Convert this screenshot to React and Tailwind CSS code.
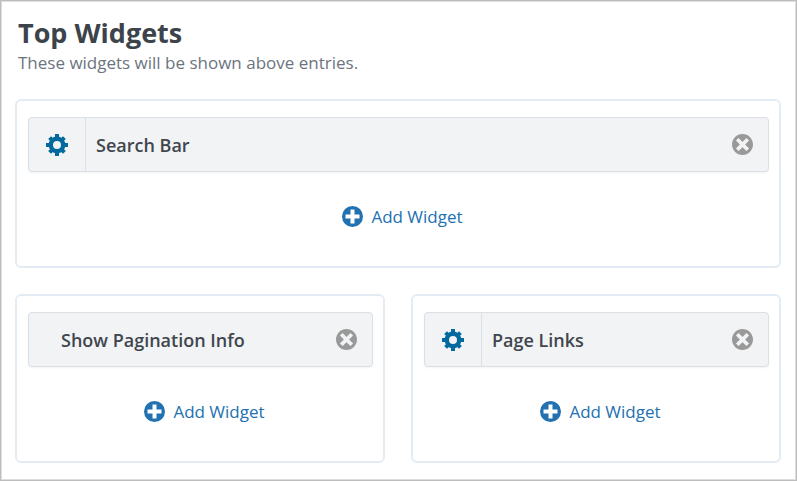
function GearIcon() {
  return (
    <svg className="size-[22px]" viewBox="0 0 22 22" fill="none" stroke="currentColor" aria-hidden="true">
      <circle cx="11" cy="11" r="6.2" strokeWidth="4.4" />
      <path
        strokeWidth="4"
        d="M11 0v4M11 18v4M0 11h4M18 11h4M3.6 3.6l2.8 2.8M15.6 15.6l2.8 2.8M18.4 3.6l-2.8 2.8M6.4 15.6l-2.8 2.8"
      />
    </svg>
  )
}

function DismissIcon() {
  return (
    <svg className="size-[21px]" viewBox="2 2 16 16" fill="currentColor" aria-hidden="true">
      <path d="M10 2c4.42 0 8 3.58 8 8s-3.58 8-8 8-8-3.58-8-8 3.58-8 8-8zm5 11l-3-3 3-3-2-2-3 3-3-3-2 2 3 3-3 3 2 2 3-3 3 3z" />
    </svg>
  )
}

function PlusIcon() {
  return (
    <svg className="size-[21px]" viewBox="0 0 21 21" fill="currentColor" aria-hidden="true">
      <path
        fillRule="evenodd"
        d="M10.5 0a10.5 10.5 0 1 1 0 21a10.5 10.5 0 0 1 0-21zM8.5 3.5v5h-5v4h5v5h4v-5h5v-4h-5v-5z"
      />
    </svg>
  )
}

function Widget({ label, settings }) {
  return (
    <div className="flex h-[55px] items-stretch rounded border border-[#dcdfe3] bg-[#f2f3f5] shadow-xs">
      {settings && (
        <button
          type="button"
          aria-label={`${label} settings`}
          className="flex w-[57px] items-center justify-center border-r border-[#dcdfe3] text-[#036a9f]"
        >
          <GearIcon />
        </button>
      )}
      <h3 className={`flex-1 self-center text-lg font-semibold text-[#40464d] ${settings ? 'pl-[10px]' : 'pl-8'}`}>
        {label}
      </h3>
      <button type="button" aria-label={`Remove ${label}`} className="px-[15px] text-[#999999]">
        <DismissIcon />
      </button>
    </div>
  )
}

function WidgetArea({ label, settings, className = '' }) {
  return (
    <section className={`rounded-md border-2 border-[#e3ecf4] pt-4 pr-[10px] pb-9 pl-[11px] ${className}`}>
      <Widget label={label} settings={settings} />
      <div className="mt-[31px] flex justify-center pl-2">
        <button type="button" className="flex items-center gap-2 text-[17px] leading-[27px] text-[#2271b1]">
          <PlusIcon />
          Add Widget
        </button>
      </div>
    </section>
  )
}

export default function App() {
  return (
    <main className="border border-[#bdbdbd] bg-white font-['Open_Sans','Noto_Sans',sans-serif]">
      <div className="border border-[#dedede] pt-[11px] pr-[14px] pb-4 pl-[13px]">
        <header className="px-[3px]">
          <h1 className="text-[27px] leading-10 font-bold text-[#3c434a]">Top Widgets</h1>
          <p className="text-[17px] leading-5 text-[#6c7480]">These widgets will be shown above entries.</p>
        </header>
        <div className="mt-[26px] grid grid-cols-2 gap-[26px]">
          <WidgetArea label="Search Bar" settings className="col-span-2" />
          <WidgetArea label="Show Pagination Info" />
          <WidgetArea label="Page Links" settings />
        </div>
      </div>
    </main>
  )
}
